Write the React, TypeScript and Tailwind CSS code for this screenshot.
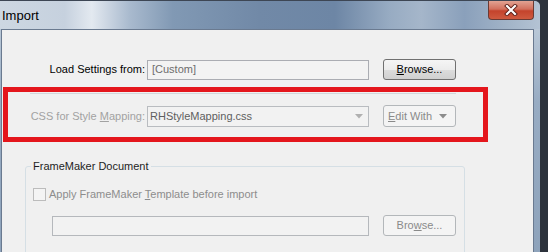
import React from "react"

const font = { fontFamily: '"Liberation Sans", Arial, sans-serif' }

function CloseGlyph() {
  return (
    <svg width="14" height="12" viewBox="0 0 14 12">
      <path d="M3 2 L11 10 M11 2 L3 10" stroke="#5a1d16" strokeWidth="4" strokeLinecap="square" fill="none" />
      <path d="M3 2 L11 10 M11 2 L3 10" stroke="#ffffff" strokeWidth="2.2" strokeLinecap="square" fill="none" />
    </svg>
  )
}

function Arrow({ color = "#9a9a9a" }: { color?: string }) {
  return (
    <svg width="8" height="5" viewBox="0 0 8 5">
      <path d="M0 0 L8 0 L4 4.5 Z" fill={color} />
    </svg>
  )
}

export default function App() {
  return (
    <div className="flex w-[548px] h-[252px] overflow-hidden bg-[#2c323c] text-[11px]" style={font}>
      {/* window */}
      <div className="flex flex-col w-[540px] h-full rounded-tr-[6px] bg-[linear-gradient(180deg,#c6d2de_0%,#98acc3_40%,#8ea3bb_100%)] border-t border-[#3d4654]">
        {/* title bar */}
        <div className="flex items-start h-[28px] shrink-0 rounded-tr-[6px] bg-[linear-gradient(90deg,#cdd7e2_0%,#c6d1de_12%,#e3e9f0_17%,#a9bace_24%,#8199b4_32%,#7189a7_48%,#6d86a5_62%,#97abc2_72%,#a5b6ca_78%,#8aa0bb_86%,#a2b4c8_94%,#b4c3d4_100%)]">
          <span className="pl-[2px] pt-[7px] text-[13px] leading-[15px] text-black">Import</span>
          <div className="ml-auto mr-[6px] flex items-center justify-center w-[46px] h-[19px] rounded-b-[4px] border border-t-0 border-[#6b3a33] bg-[linear-gradient(180deg,#e2a393_0%,#d2705d_45%,#c4432c_55%,#cf5a3f_100%)]">
            <CloseGlyph />
          </div>
        </div>

        {/* client area */}
        <div className="flex-1 ml-[1px] mr-[6px] border-l border-t border-r border-[#6a7a90] bg-[#f0f0f0] overflow-hidden">
          {/* Load settings row */}
          <div className="flex items-center h-[21px] mt-[29px]">
            <span className="w-[143px] text-right text-black">Load Settings from:</span>
            <div className="ml-[2px] w-[222px] h-[20px] flex items-center pl-[4px] border border-[#abadb3] bg-[#f3f3f3] text-[#6d6d6d]">
              [Custom]
            </div>
            <button className="ml-[14px] w-[73px] h-[21px] rounded-[3px] border border-[#707070] bg-[linear-gradient(180deg,#f5f5f5_0%,#ececec_50%,#dcdcdc_52%,#d0d0d0_100%)] text-black">
              <u className="underline-offset-1">B</u>rowse...
            </button>
          </div>

          {/* highlighted CSS row */}
          <div className="mt-[7px] ml-[1px] w-[485px] h-[55px] border-[5px] border-[#e4161c]">
            <div className="mt-[1px] ml-[22px] w-[426px] h-[1px] bg-[#d2d6da]" />
            <div className="flex items-center h-[22px] mt-[11px]">
              <span className="w-[137px] text-right text-[#a2a2a2]">
                CSS for Style <u className="underline-offset-1">M</u>apping:
              </span>
              <div className="ml-[2px] w-[222px] h-[21px] flex items-center pl-[2px] pr-[5px] border border-[#b9bcc0] bg-[#f2f2f2] text-[#5e5e5e]">
                <span>RHStyleMapping.css</span>
                <span className="ml-auto">
                  <Arrow color="#b0b0b0" />
                </span>
              </div>
              <button className="ml-[14px] w-[73px] h-[22px] flex items-center pl-[4px] pr-[8px] rounded-[3px] border border-[#b3b7ba] bg-[#f4f4f4] text-[#8a8a8a]">
                <span>
                  <u className="underline-offset-1">E</u>dit With
                </span>
                <span className="ml-auto">
                  <Arrow color="#8c8c8c" />
                </span>
              </button>
            </div>
          </div>

          {/* FrameMaker group */}
          <fieldset className="mt-[18px] ml-[23px] w-[440px] h-[120px] border border-[#d5dfe5] rounded-[3px]">
            <legend className="ml-[5px] px-[2px] leading-[13px] text-[#1e1e1e]">FrameMaker Document</legend>
            <div className="flex items-center mt-[15px] ml-[7px] h-[13px]">
              <span className="w-[13px] h-[13px] border border-[#bcbcbc] bg-[#f4f4f4]" />
              <span className="ml-[3px] text-[#8d8d8d]">
                Apply FrameMaker <u className="underline-offset-1">T</u>emplate before import
              </span>
            </div>
            <div className="flex items-center mt-[14px] ml-[26px] h-[21px]">
              <div className="w-[317px] h-[20px] border border-[#b5b8bc] bg-[#f2f2f2]" />
              <button className="ml-[14px] w-[73px] h-[21px] rounded-[3px] border border-[#b3b7ba] bg-[#f4f4f4] text-[#8a8a8a]">
                Bro<u className="underline-offset-1">w</u>se...
              </button>
            </div>
          </fieldset>
        </div>
      </div>
    </div>
  )
}
